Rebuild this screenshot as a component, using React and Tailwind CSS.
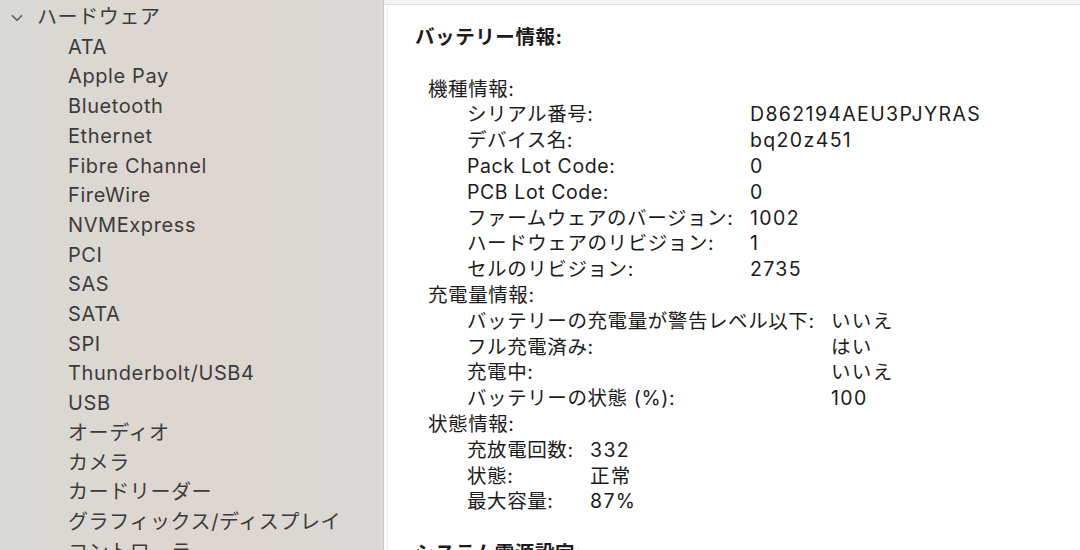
import { ChevronDown } from "lucide-react";

const hardware = [
  "ATA",
  "Apple Pay",
  "Bluetooth",
  "Ethernet",
  "Fibre Channel",
  "FireWire",
  "NVMExpress",
  "PCI",
  "SAS",
  "SATA",
  "SPI",
  "Thunderbolt/USB4",
  "USB",
  "オーディオ",
  "カメラ",
  "カードリーダー",
  "グラフィックス/ディスプレイ",
  "コントローラ",
];

const model = [
  ["シリアル番号:", "D862194AEU3PJYRAS"],
  ["デバイス名:", "bq20z451"],
  ["Pack Lot Code:", "0"],
  ["PCB Lot Code:", "0"],
  ["ファームウェアのバージョン:", "1002"],
  ["ハードウェアのリビジョン:", "1"],
  ["セルのリビジョン:", "2735"],
];

const charge = [
  ["バッテリーの充電量が警告レベル以下:", "いいえ"],
  ["フル充電済み:", "はい"],
  ["充電中:", "いいえ"],
  ["バッテリーの状態 (%):", "100"],
];

const health = [
  ["充放電回数:", "332"],
  ["状態:", "正常"],
  ["最大容量:", "87%"],
];

function Rows({ rows, labelWidth }) {
  return (
    <div className="pl-[39px]">
      {rows.map(([k, v]) => (
        <div key={k} className="flex whitespace-nowrap">
          <div className={labelWidth}>{k}</div>
          <div className="tracking-[0.07em]">{v}</div>
        </div>
      ))}
    </div>
  );
}

export default function App() {
  return (
    <div
      className="flex h-[550px] w-[1080px] overflow-hidden"
      style={{ fontFamily: 'Inter, "Noto Sans CJK JP", sans-serif' }}
    >
      {/* Sidebar */}
      <div className="w-[384px] shrink-0 border-r border-[#c9c7c3] bg-gradient-to-r from-[#d9d9d5] via-[#ded6d0] to-[#dad9d6] text-[20px] leading-[29.7px] tracking-[0.03em] text-[#3d3b39]">
        <div className="flex items-center pl-[8px] pt-[3px]">
          <ChevronDown size={18} strokeWidth={2.2} className="text-[#5b5a58]" />
          <span className="ml-[11px]">ハードウェア</span>
        </div>
        <ul className="pl-[68px]">
          {hardware.map((h) => (
            <li key={h} className="whitespace-nowrap">
              {h}
            </li>
          ))}
        </ul>
      </div>

      {/* Detail */}
      <div className="flex min-w-0 flex-1 flex-col bg-white">
        <div className="h-[5px] shrink-0 border-b border-[#dedede] bg-[#f2f2f2]" />
        <div className="ml-[3px] flex-1 border-l border-[#ececec] pl-[27px] pt-[20px] text-[19.5px] leading-[25.8px] tracking-[0.03em] text-[#1c1c1c]">
          <div className="font-bold">バッテリー情報:</div>
          <div className="h-[25.8px]" />
          <div className="pl-[13px]">
            <div>機種情報:</div>
            <Rows rows={model} labelWidth="w-[283px]" />
            <div>充電量情報:</div>
            <Rows rows={charge} labelWidth="w-[364px]" />
            <div>状態情報:</div>
            <Rows rows={health} labelWidth="w-[123px]" />
          </div>
          <div className="h-[25.8px]" />
          <div className="font-bold">システム電源設定:</div>
        </div>
      </div>
    </div>
  );
}
